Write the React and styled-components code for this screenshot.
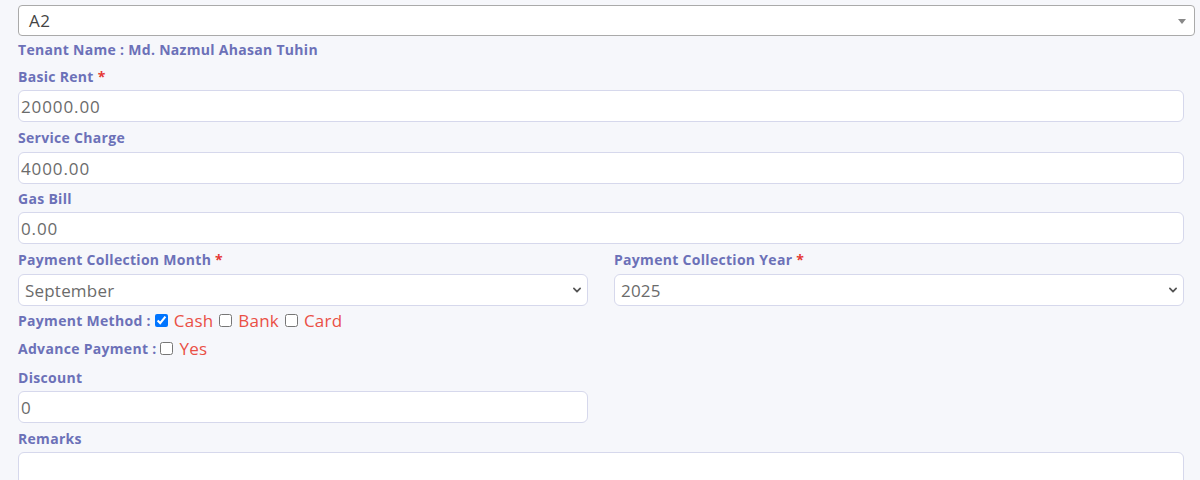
import React from 'react'
import styled, { createGlobalStyle } from 'styled-components'

const GlobalStyle = createGlobalStyle`
  body {
    margin: 0;
    background: #f6f7fb;
    font-family: "Open Sans", "Liberation Sans", sans-serif;
  }
`

const Page = styled.div`
  padding: 5px 5px 0 18px;
  overflow: hidden;
  height: 480px;
  box-sizing: border-box;
`

const UnitSelect = styled.div`
  position: relative;
  height: 31px;
  box-sizing: border-box;
  border: 1px solid #aaaaaa;
  border-radius: 4px;
  background: #fff;
  display: flex;
  align-items: center;
  padding-left: 10px;
  font-size: 17px;
  letter-spacing: 0.4px;
  color: #444;

  &::after {
    content: '';
    position: absolute;
    right: 8px;
    top: 13px;
    border-left: 4px solid transparent;
    border-right: 4px solid transparent;
    border-top: 5px solid #888;
  }
`

const Fields = styled.div`
  padding-right: 11px;
`

const Tenant = styled.div`
  margin: 3px 0 0;
  font-size: 14px;
  line-height: 21px;
  font-weight: 700;
  letter-spacing: 0.3px;
  color: #6c71b8;
`

const Label = styled.label`
  display: block;
  margin: ${p => p.$mt ?? 5}px 0 ${p => p.$mb ?? 4}px;
  font-size: 14px;
  line-height: 21px;
  font-weight: 700;
  letter-spacing: 0.3px;
  color: #6c71b8;

  span {
    color: #e53935;
  }
`

const Input = styled.input`
  display: block;
  width: 100%;
  height: 32px;
  box-sizing: border-box;
  border: 1px solid #d6d8ec;
  border-radius: 6px;
  background: #fff;
  padding: 0 2px;
  font-family: inherit;
  font-size: 17px;
  letter-spacing: 0.9px;
  color: #6b6b6b;
  outline: none;
`

const TextArea = styled.textarea`
  display: block;
  width: 100%;
  height: 60px;
  box-sizing: border-box;
  border: 1px solid #d6d8ec;
  border-radius: 6px;
  background: #fff;
  resize: none;
  outline: none;
`

const Row = styled.div`
  display: grid;
  grid-template-columns: 1fr 1fr;
  column-gap: 26px;
`

const SelectWrap = styled.div`
  position: relative;

  svg {
    position: absolute;
    right: 5px;
    top: 11px;
    pointer-events: none;
  }
`

const Select = styled.select`
  display: block;
  width: 100%;
  height: 32px;
  box-sizing: border-box;
  border: 1px solid #d6d8ec;
  border-radius: 6px;
  background: #fff;
  padding: 0 6px;
  font-family: inherit;
  font-size: 17px;
  letter-spacing: 0.2px;
  color: #6b6b6b;
  appearance: none;
  outline: none;
`

const CheckRow = styled.div`
  display: flex;
  align-items: center;
  gap: 4px;
  margin-top: ${p => p.$top}px;
  font-size: 14px;
  line-height: 21px;
  font-weight: 700;
  letter-spacing: 0.3px;
  color: #6c71b8;

  input {
    margin: 0 6px 0 0;
    width: 13px;
    height: 13px;
  }
`

const Option = styled.label`
  display: flex;
  align-items: center;
  font-size: 17px;
  font-weight: 400;
  letter-spacing: 0.2px;
  color: #ea4f45;
  margin-right: 2px;
`

const Chevron = () => (
  <svg width="12" height="10" viewBox="0 0 16 16">
    <path d="M3 5.5l5 5 5-5" fill="none" stroke="#555" strokeWidth="2.8" strokeLinecap="round" strokeLinejoin="round" />
  </svg>
)

const DropDown = ({ value, options }) => (
  <SelectWrap>
    <Select defaultValue={value}>
      {options.map(o => <option key={o}>{o}</option>)}
    </Select>
    <Chevron />
  </SelectWrap>
)

const months = ['January', 'February', 'March', 'April', 'May', 'June', 'July', 'August', 'September', 'October', 'November', 'December']

export default function App() {
  return (
    <Page>
      <GlobalStyle />
      <UnitSelect>A2</UnitSelect>
      <Fields>
        <Tenant>Tenant Name : Md. Nazmul Ahasan Tuhin</Tenant>

        <Label $mt={6} $mb={3}>Basic Rent <span>*</span></Label>
        <Input defaultValue="20000.00" />

        <Label>Service Charge</Label>
        <Input defaultValue="4000.00" />

        <Label $mt={4} $mb={3}>Gas Bill</Label>
        <Input defaultValue="0.00" />

        <Row>
          <div>
            <Label>Payment Collection Month <span>*</span></Label>
            <DropDown value="September" options={months} />
          </div>
          <div>
            <Label>Payment Collection Year <span>*</span></Label>
            <DropDown value="2025" options={['2024', '2025', '2026']} />
          </div>
        </Row>

        <CheckRow $top={4}>
          Payment Method :
          <Option><input type="checkbox" defaultChecked />Cash</Option>
          <Option><input type="checkbox" />Bank</Option>
          <Option><input type="checkbox" />Card</Option>
        </CheckRow>

        <CheckRow $top={7}>
          Advance Payment :
          <Option><input type="checkbox" />Yes</Option>
        </CheckRow>

        <Row>
          <div>
            <Label $mt={8} $mb={3}>Discount</Label>
            <Input defaultValue="0" />
          </div>
        </Row>

        <Label $mb={3}>Remarks</Label>
        <TextArea />
      </Fields>
    </Page>
  )
}
